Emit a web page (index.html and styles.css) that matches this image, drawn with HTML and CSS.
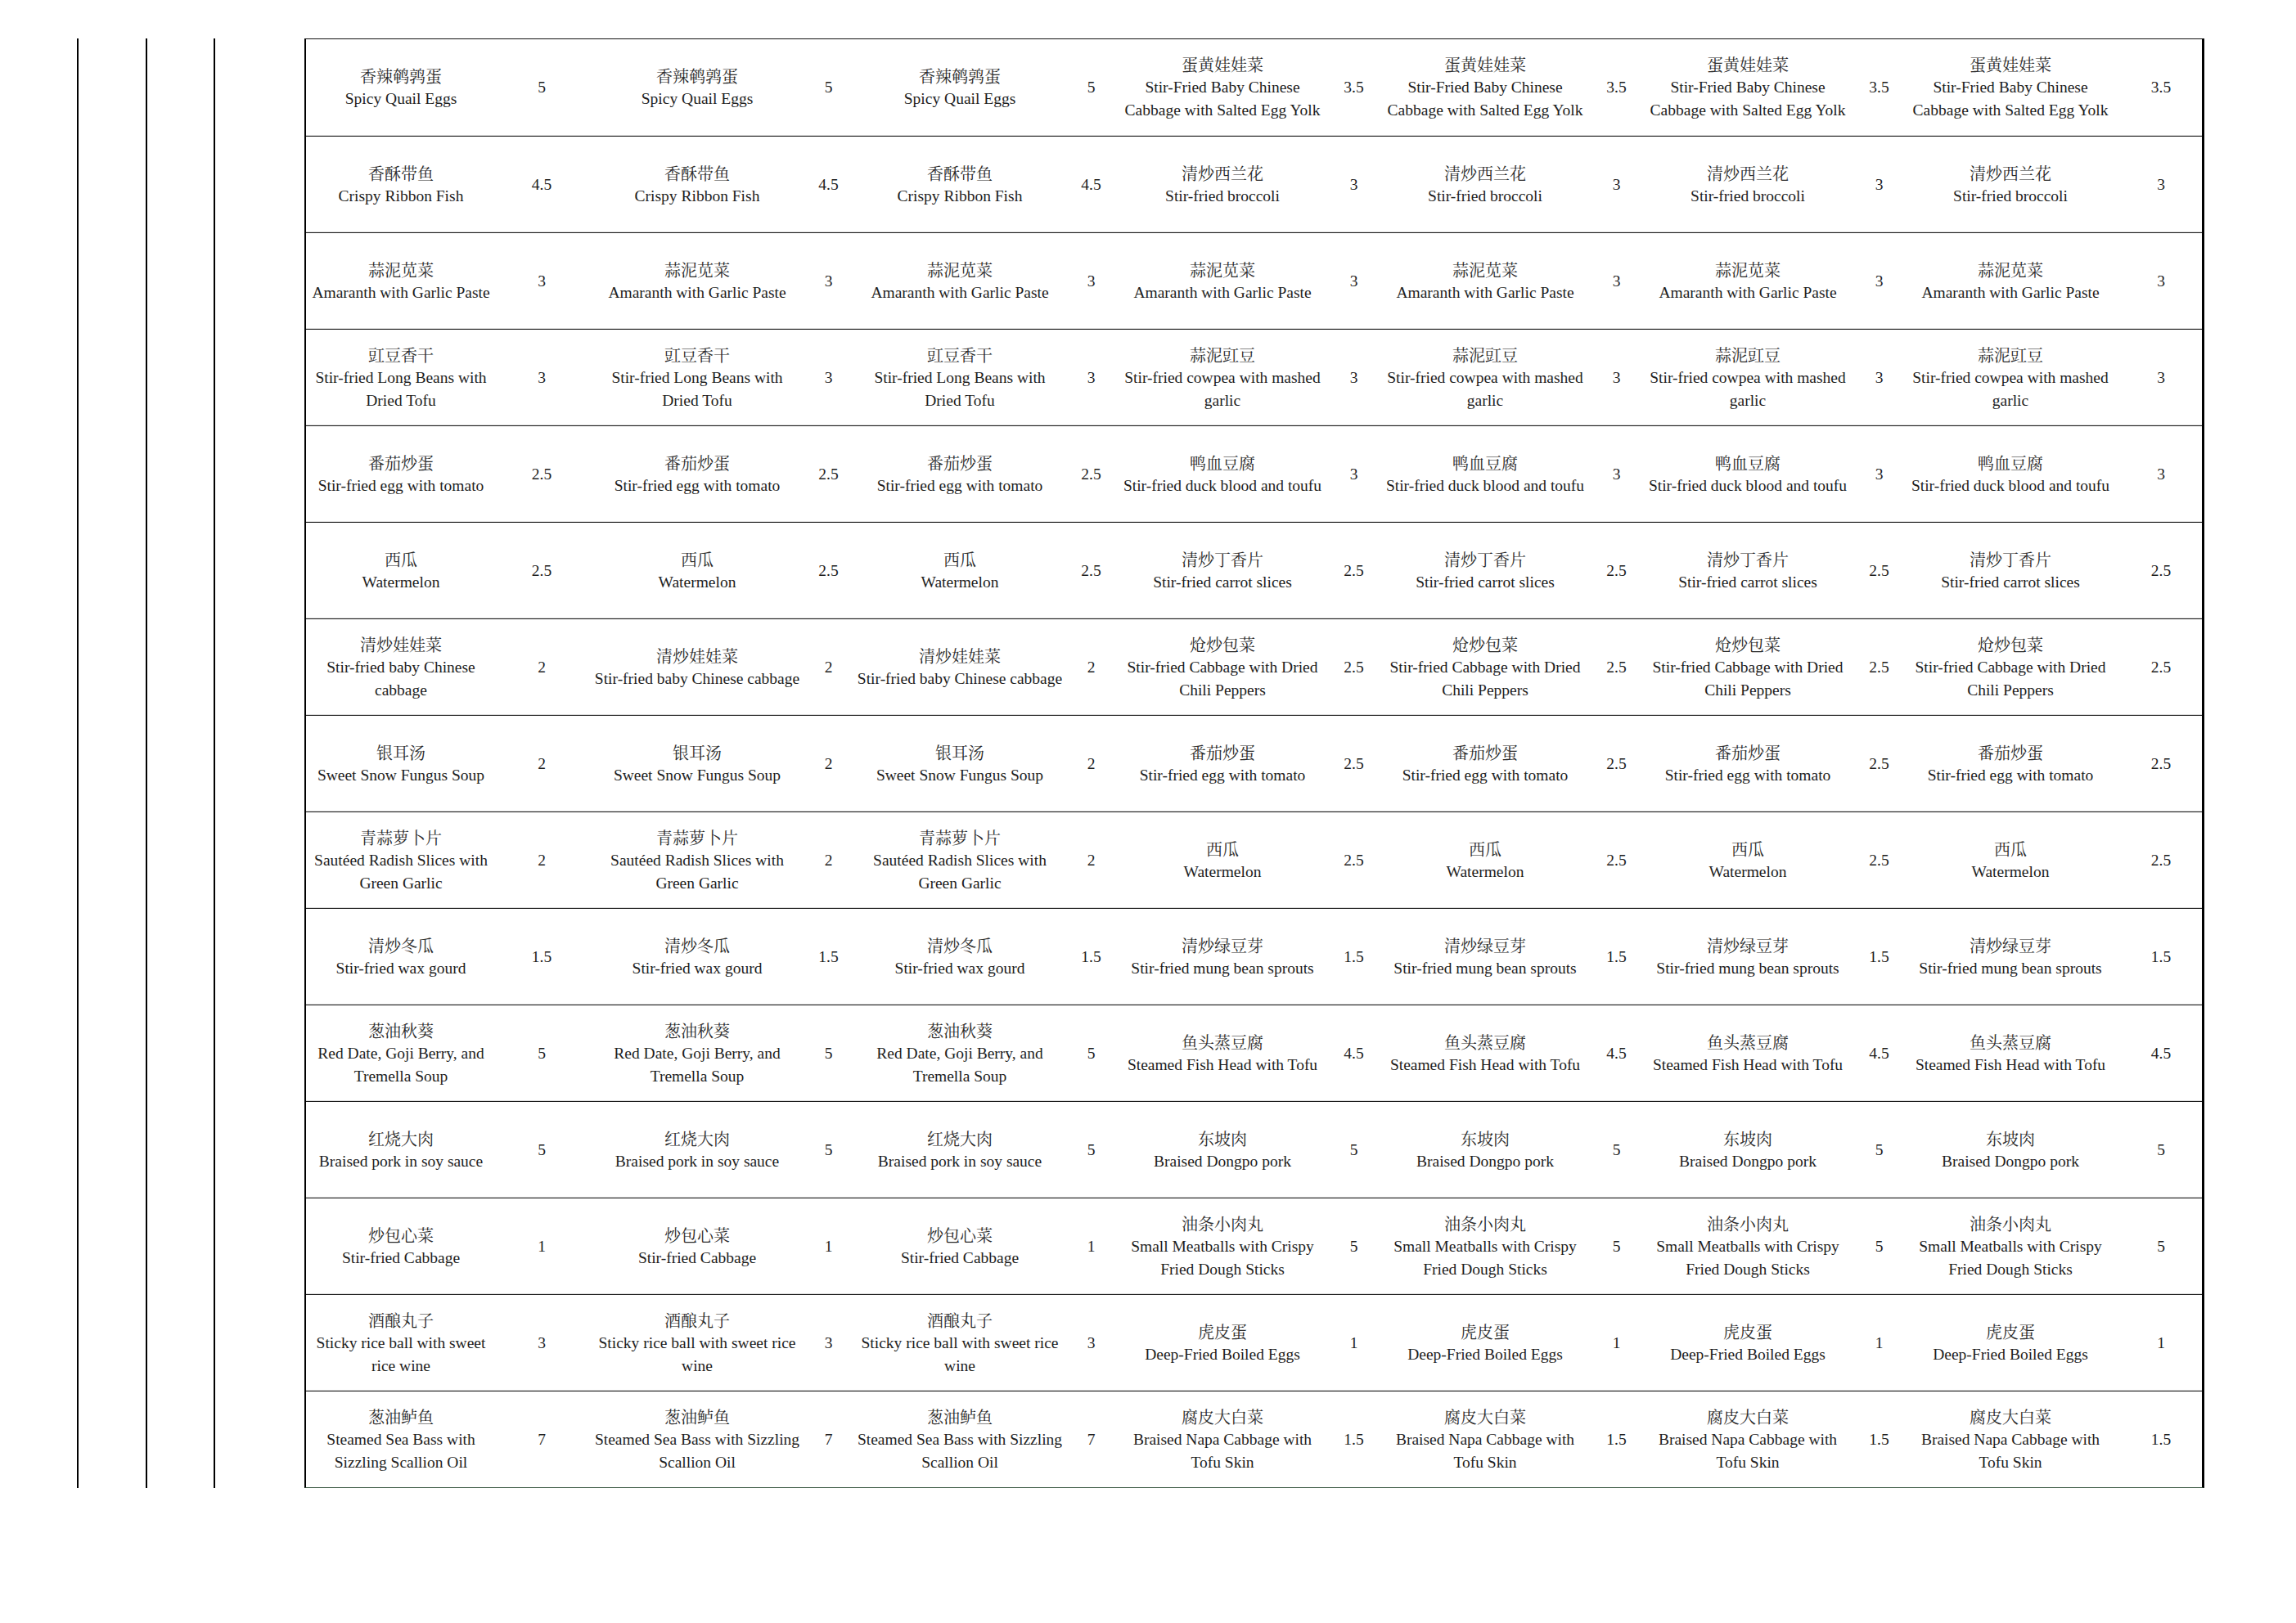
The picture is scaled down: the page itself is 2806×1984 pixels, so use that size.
FILE: index.html
```html
<!DOCTYPE html>
<html lang="zh">
<head>
<meta charset="utf-8">
<title>Menu</title>
<link rel="stylesheet" href="styles.css">
</head>
<body>
<div class="page">
  <div class="rail r1"></div>
  <div class="rail r2"></div>
  <div class="rail r3"></div>
  <table class="menu">
    <colgroup>
      <col class="w-n1"><col class="w-p1">
      <col class="w-n"><col class="w-p">
      <col class="w-n"><col class="w-p">
      <col class="w-n"><col class="w-p">
      <col class="w-n"><col class="w-p">
      <col class="w-n"><col class="w-p">
      <col class="w-n"><col class="w-p7">
    </colgroup>
    <tbody>
      <tr>
        <td class="dish"><div class="zh">香辣鹌鹑蛋</div><div class="en">Spicy Quail Eggs</div></td><td class="price">5</td>
        <td class="dish"><div class="zh">香辣鹌鹑蛋</div><div class="en">Spicy Quail Eggs</div></td><td class="price">5</td>
        <td class="dish"><div class="zh">香辣鹌鹑蛋</div><div class="en">Spicy Quail Eggs</div></td><td class="price">5</td>
        <td class="dish"><div class="zh">蛋黄娃娃菜</div><div class="en">Stir-Fried Baby Chinese<br>Cabbage with Salted Egg Yolk</div></td><td class="price">3.5</td>
        <td class="dish"><div class="zh">蛋黄娃娃菜</div><div class="en">Stir-Fried Baby Chinese<br>Cabbage with Salted Egg Yolk</div></td><td class="price">3.5</td>
        <td class="dish"><div class="zh">蛋黄娃娃菜</div><div class="en">Stir-Fried Baby Chinese<br>Cabbage with Salted Egg Yolk</div></td><td class="price">3.5</td>
        <td class="dish"><div class="zh">蛋黄娃娃菜</div><div class="en">Stir-Fried Baby Chinese<br>Cabbage with Salted Egg Yolk</div></td><td class="price">3.5</td>
      </tr>
      <tr>
        <td class="dish"><div class="zh">香酥带鱼</div><div class="en">Crispy Ribbon Fish</div></td><td class="price">4.5</td>
        <td class="dish"><div class="zh">香酥带鱼</div><div class="en">Crispy Ribbon Fish</div></td><td class="price">4.5</td>
        <td class="dish"><div class="zh">香酥带鱼</div><div class="en">Crispy Ribbon Fish</div></td><td class="price">4.5</td>
        <td class="dish"><div class="zh">清炒西兰花</div><div class="en">Stir-fried broccoli</div></td><td class="price">3</td>
        <td class="dish"><div class="zh">清炒西兰花</div><div class="en">Stir-fried broccoli</div></td><td class="price">3</td>
        <td class="dish"><div class="zh">清炒西兰花</div><div class="en">Stir-fried broccoli</div></td><td class="price">3</td>
        <td class="dish"><div class="zh">清炒西兰花</div><div class="en">Stir-fried broccoli</div></td><td class="price">3</td>
      </tr>
      <tr>
        <td class="dish"><div class="zh">蒜泥苋菜</div><div class="en">Amaranth with Garlic Paste</div></td><td class="price">3</td>
        <td class="dish"><div class="zh">蒜泥苋菜</div><div class="en">Amaranth with Garlic Paste</div></td><td class="price">3</td>
        <td class="dish"><div class="zh">蒜泥苋菜</div><div class="en">Amaranth with Garlic Paste</div></td><td class="price">3</td>
        <td class="dish"><div class="zh">蒜泥苋菜</div><div class="en">Amaranth with Garlic Paste</div></td><td class="price">3</td>
        <td class="dish"><div class="zh">蒜泥苋菜</div><div class="en">Amaranth with Garlic Paste</div></td><td class="price">3</td>
        <td class="dish"><div class="zh">蒜泥苋菜</div><div class="en">Amaranth with Garlic Paste</div></td><td class="price">3</td>
        <td class="dish"><div class="zh">蒜泥苋菜</div><div class="en">Amaranth with Garlic Paste</div></td><td class="price">3</td>
      </tr>
      <tr>
        <td class="dish"><div class="zh">豇豆香干</div><div class="en">Stir-fried Long Beans with<br>Dried Tofu</div></td><td class="price">3</td>
        <td class="dish"><div class="zh">豇豆香干</div><div class="en">Stir-fried Long Beans with<br>Dried Tofu</div></td><td class="price">3</td>
        <td class="dish"><div class="zh">豇豆香干</div><div class="en">Stir-fried Long Beans with<br>Dried Tofu</div></td><td class="price">3</td>
        <td class="dish"><div class="zh">蒜泥豇豆</div><div class="en">Stir-fried cowpea with mashed<br>garlic</div></td><td class="price">3</td>
        <td class="dish"><div class="zh">蒜泥豇豆</div><div class="en">Stir-fried cowpea with mashed<br>garlic</div></td><td class="price">3</td>
        <td class="dish"><div class="zh">蒜泥豇豆</div><div class="en">Stir-fried cowpea with mashed<br>garlic</div></td><td class="price">3</td>
        <td class="dish"><div class="zh">蒜泥豇豆</div><div class="en">Stir-fried cowpea with mashed<br>garlic</div></td><td class="price">3</td>
      </tr>
      <tr>
        <td class="dish"><div class="zh">番茄炒蛋</div><div class="en">Stir-fried egg with tomato</div></td><td class="price">2.5</td>
        <td class="dish"><div class="zh">番茄炒蛋</div><div class="en">Stir-fried egg with tomato</div></td><td class="price">2.5</td>
        <td class="dish"><div class="zh">番茄炒蛋</div><div class="en">Stir-fried egg with tomato</div></td><td class="price">2.5</td>
        <td class="dish"><div class="zh">鸭血豆腐</div><div class="en">Stir-fried duck blood and toufu</div></td><td class="price">3</td>
        <td class="dish"><div class="zh">鸭血豆腐</div><div class="en">Stir-fried duck blood and toufu</div></td><td class="price">3</td>
        <td class="dish"><div class="zh">鸭血豆腐</div><div class="en">Stir-fried duck blood and toufu</div></td><td class="price">3</td>
        <td class="dish"><div class="zh">鸭血豆腐</div><div class="en">Stir-fried duck blood and toufu</div></td><td class="price">3</td>
      </tr>
      <tr>
        <td class="dish"><div class="zh">西瓜</div><div class="en">Watermelon</div></td><td class="price">2.5</td>
        <td class="dish"><div class="zh">西瓜</div><div class="en">Watermelon</div></td><td class="price">2.5</td>
        <td class="dish"><div class="zh">西瓜</div><div class="en">Watermelon</div></td><td class="price">2.5</td>
        <td class="dish"><div class="zh">清炒丁香片</div><div class="en">Stir-fried carrot slices</div></td><td class="price">2.5</td>
        <td class="dish"><div class="zh">清炒丁香片</div><div class="en">Stir-fried carrot slices</div></td><td class="price">2.5</td>
        <td class="dish"><div class="zh">清炒丁香片</div><div class="en">Stir-fried carrot slices</div></td><td class="price">2.5</td>
        <td class="dish"><div class="zh">清炒丁香片</div><div class="en">Stir-fried carrot slices</div></td><td class="price">2.5</td>
      </tr>
      <tr>
        <td class="dish"><div class="zh">清炒娃娃菜</div><div class="en">Stir-fried baby Chinese<br>cabbage</div></td><td class="price">2</td>
        <td class="dish"><div class="zh">清炒娃娃菜</div><div class="en">Stir-fried baby Chinese cabbage</div></td><td class="price">2</td>
        <td class="dish"><div class="zh">清炒娃娃菜</div><div class="en">Stir-fried baby Chinese cabbage</div></td><td class="price">2</td>
        <td class="dish"><div class="zh">炝炒包菜</div><div class="en">Stir-fried Cabbage with Dried<br>Chili Peppers</div></td><td class="price">2.5</td>
        <td class="dish"><div class="zh">炝炒包菜</div><div class="en">Stir-fried Cabbage with Dried<br>Chili Peppers</div></td><td class="price">2.5</td>
        <td class="dish"><div class="zh">炝炒包菜</div><div class="en">Stir-fried Cabbage with Dried<br>Chili Peppers</div></td><td class="price">2.5</td>
        <td class="dish"><div class="zh">炝炒包菜</div><div class="en">Stir-fried Cabbage with Dried<br>Chili Peppers</div></td><td class="price">2.5</td>
      </tr>
      <tr>
        <td class="dish"><div class="zh">银耳汤</div><div class="en">Sweet Snow Fungus Soup</div></td><td class="price">2</td>
        <td class="dish"><div class="zh">银耳汤</div><div class="en">Sweet Snow Fungus Soup</div></td><td class="price">2</td>
        <td class="dish"><div class="zh">银耳汤</div><div class="en">Sweet Snow Fungus Soup</div></td><td class="price">2</td>
        <td class="dish"><div class="zh">番茄炒蛋</div><div class="en">Stir-fried egg with tomato</div></td><td class="price">2.5</td>
        <td class="dish"><div class="zh">番茄炒蛋</div><div class="en">Stir-fried egg with tomato</div></td><td class="price">2.5</td>
        <td class="dish"><div class="zh">番茄炒蛋</div><div class="en">Stir-fried egg with tomato</div></td><td class="price">2.5</td>
        <td class="dish"><div class="zh">番茄炒蛋</div><div class="en">Stir-fried egg with tomato</div></td><td class="price">2.5</td>
      </tr>
      <tr>
        <td class="dish"><div class="zh">青蒜萝卜片</div><div class="en">Sautéed Radish Slices with<br>Green Garlic</div></td><td class="price">2</td>
        <td class="dish"><div class="zh">青蒜萝卜片</div><div class="en">Sautéed Radish Slices with<br>Green Garlic</div></td><td class="price">2</td>
        <td class="dish"><div class="zh">青蒜萝卜片</div><div class="en">Sautéed Radish Slices with<br>Green Garlic</div></td><td class="price">2</td>
        <td class="dish"><div class="zh">西瓜</div><div class="en">Watermelon</div></td><td class="price">2.5</td>
        <td class="dish"><div class="zh">西瓜</div><div class="en">Watermelon</div></td><td class="price">2.5</td>
        <td class="dish"><div class="zh">西瓜</div><div class="en">Watermelon</div></td><td class="price">2.5</td>
        <td class="dish"><div class="zh">西瓜</div><div class="en">Watermelon</div></td><td class="price">2.5</td>
      </tr>
      <tr>
        <td class="dish"><div class="zh">清炒冬瓜</div><div class="en">Stir-fried wax gourd</div></td><td class="price">1.5</td>
        <td class="dish"><div class="zh">清炒冬瓜</div><div class="en">Stir-fried wax gourd</div></td><td class="price">1.5</td>
        <td class="dish"><div class="zh">清炒冬瓜</div><div class="en">Stir-fried wax gourd</div></td><td class="price">1.5</td>
        <td class="dish"><div class="zh">清炒绿豆芽</div><div class="en">Stir-fried mung bean sprouts</div></td><td class="price">1.5</td>
        <td class="dish"><div class="zh">清炒绿豆芽</div><div class="en">Stir-fried mung bean sprouts</div></td><td class="price">1.5</td>
        <td class="dish"><div class="zh">清炒绿豆芽</div><div class="en">Stir-fried mung bean sprouts</div></td><td class="price">1.5</td>
        <td class="dish"><div class="zh">清炒绿豆芽</div><div class="en">Stir-fried mung bean sprouts</div></td><td class="price">1.5</td>
      </tr>
      <tr>
        <td class="dish"><div class="zh">葱油秋葵</div><div class="en">Red Date, Goji Berry, and<br>Tremella Soup</div></td><td class="price">5</td>
        <td class="dish"><div class="zh">葱油秋葵</div><div class="en">Red Date, Goji Berry, and<br>Tremella Soup</div></td><td class="price">5</td>
        <td class="dish"><div class="zh">葱油秋葵</div><div class="en">Red Date, Goji Berry, and<br>Tremella Soup</div></td><td class="price">5</td>
        <td class="dish"><div class="zh">鱼头蒸豆腐</div><div class="en">Steamed Fish Head with Tofu</div></td><td class="price">4.5</td>
        <td class="dish"><div class="zh">鱼头蒸豆腐</div><div class="en">Steamed Fish Head with Tofu</div></td><td class="price">4.5</td>
        <td class="dish"><div class="zh">鱼头蒸豆腐</div><div class="en">Steamed Fish Head with Tofu</div></td><td class="price">4.5</td>
        <td class="dish"><div class="zh">鱼头蒸豆腐</div><div class="en">Steamed Fish Head with Tofu</div></td><td class="price">4.5</td>
      </tr>
      <tr>
        <td class="dish"><div class="zh">红烧大肉</div><div class="en">Braised pork in soy sauce</div></td><td class="price">5</td>
        <td class="dish"><div class="zh">红烧大肉</div><div class="en">Braised pork in soy sauce</div></td><td class="price">5</td>
        <td class="dish"><div class="zh">红烧大肉</div><div class="en">Braised pork in soy sauce</div></td><td class="price">5</td>
        <td class="dish"><div class="zh">东坡肉</div><div class="en">Braised Dongpo pork</div></td><td class="price">5</td>
        <td class="dish"><div class="zh">东坡肉</div><div class="en">Braised Dongpo pork</div></td><td class="price">5</td>
        <td class="dish"><div class="zh">东坡肉</div><div class="en">Braised Dongpo pork</div></td><td class="price">5</td>
        <td class="dish"><div class="zh">东坡肉</div><div class="en">Braised Dongpo pork</div></td><td class="price">5</td>
      </tr>
      <tr>
        <td class="dish"><div class="zh">炒包心菜</div><div class="en">Stir-fried Cabbage</div></td><td class="price">1</td>
        <td class="dish"><div class="zh">炒包心菜</div><div class="en">Stir-fried Cabbage</div></td><td class="price">1</td>
        <td class="dish"><div class="zh">炒包心菜</div><div class="en">Stir-fried Cabbage</div></td><td class="price">1</td>
        <td class="dish"><div class="zh">油条小肉丸</div><div class="en">Small Meatballs with Crispy<br>Fried Dough Sticks</div></td><td class="price">5</td>
        <td class="dish"><div class="zh">油条小肉丸</div><div class="en">Small Meatballs with Crispy<br>Fried Dough Sticks</div></td><td class="price">5</td>
        <td class="dish"><div class="zh">油条小肉丸</div><div class="en">Small Meatballs with Crispy<br>Fried Dough Sticks</div></td><td class="price">5</td>
        <td class="dish"><div class="zh">油条小肉丸</div><div class="en">Small Meatballs with Crispy<br>Fried Dough Sticks</div></td><td class="price">5</td>
      </tr>
      <tr>
        <td class="dish"><div class="zh">酒酿丸子</div><div class="en">Sticky rice ball with sweet<br>rice wine</div></td><td class="price">3</td>
        <td class="dish"><div class="zh">酒酿丸子</div><div class="en">Sticky rice ball with sweet rice<br>wine</div></td><td class="price">3</td>
        <td class="dish"><div class="zh">酒酿丸子</div><div class="en">Sticky rice ball with sweet rice<br>wine</div></td><td class="price">3</td>
        <td class="dish"><div class="zh">虎皮蛋</div><div class="en">Deep-Fried Boiled Eggs</div></td><td class="price">1</td>
        <td class="dish"><div class="zh">虎皮蛋</div><div class="en">Deep-Fried Boiled Eggs</div></td><td class="price">1</td>
        <td class="dish"><div class="zh">虎皮蛋</div><div class="en">Deep-Fried Boiled Eggs</div></td><td class="price">1</td>
        <td class="dish"><div class="zh">虎皮蛋</div><div class="en">Deep-Fried Boiled Eggs</div></td><td class="price">1</td>
      </tr>
      <tr>
        <td class="dish"><div class="zh">葱油鲈鱼</div><div class="en">Steamed Sea Bass with<br>Sizzling Scallion Oil</div></td><td class="price">7</td>
        <td class="dish"><div class="zh">葱油鲈鱼</div><div class="en">Steamed Sea Bass with Sizzling<br>Scallion Oil</div></td><td class="price">7</td>
        <td class="dish"><div class="zh">葱油鲈鱼</div><div class="en">Steamed Sea Bass with Sizzling<br>Scallion Oil</div></td><td class="price">7</td>
        <td class="dish"><div class="zh">腐皮大白菜</div><div class="en">Braised Napa Cabbage with<br>Tofu Skin</div></td><td class="price">1.5</td>
        <td class="dish"><div class="zh">腐皮大白菜</div><div class="en">Braised Napa Cabbage with<br>Tofu Skin</div></td><td class="price">1.5</td>
        <td class="dish"><div class="zh">腐皮大白菜</div><div class="en">Braised Napa Cabbage with<br>Tofu Skin</div></td><td class="price">1.5</td>
        <td class="dish"><div class="zh">腐皮大白菜</div><div class="en">Braised Napa Cabbage with<br>Tofu Skin</div></td><td class="price">1.5</td>
      </tr>
    </tbody>
  </table>
</div>
</body>
</html>
```

FILE: styles.css
```css
html, body {
  margin: 0;
  padding: 0;
  background: #ffffff;
}

body {
  font-family: "Liberation Serif", "Times New Roman", "Noto Serif CJK SC", "Noto Sans CJK SC", serif;
  color: #1e1e1e;
}

.page {
  display: flex;
  align-items: stretch;
  padding: 47px 0 0 94px;
}

.rail {
  flex: none;
  border-left: 2px solid #000;
}

.r1 { width: 82px; }
.r2 { width: 81px; }
.r3 { width: 109px; }

.menu {
  flex: none;
  table-layout: fixed;
  width: 2322px;
  border-collapse: separate;
  border-spacing: 0;
  border-top: 1px solid #111;
  border-bottom: 1px solid #3d5a45;
  border-left: 2px solid #000;
  border-right: 3px solid #000;
}

.w-n1 { width: 232px; }
.w-p1 { width: 112px; }
.w-n  { width: 268px; }
.w-p  { width: 53px; }
.w-p7 { width: 100px; }

.menu td {
  height: 117px;
  padding: 0;
  text-align: center;
  vertical-align: middle;
  white-space: nowrap;
  font-size: 19.5px;
  line-height: 28px;
  box-shadow: inset 0 -1px 0 #dcdcdc;
}

.menu tr:first-child td {
  height: 118px;
}

.menu tr + tr td {
  border-top: 1px solid #1c1c1c;
}

.menu tr:last-child td {
  box-shadow: none;
}

.zh {
  font-family: "Noto Serif CJK SC", "Noto Sans CJK SC", sans-serif;
  font-size: 20px;
  line-height: 28px;
  font-weight: 400;
  color: #2a2a2a;
}

.en {
  font-family: "Liberation Serif", "Times New Roman", serif;
}

.price {
  font-family: "Liberation Serif", "Times New Roman", serif;
}
```
